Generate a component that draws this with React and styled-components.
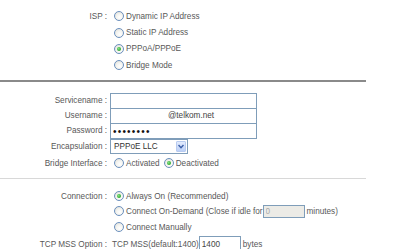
import React from "react";
import styled, { createGlobalStyle } from "styled-components";

const Global = createGlobalStyle`
  html, body {
    margin: 0;
    padding: 0;
    background: #ffffff;
  }
  body {
    font-family: "Liberation Sans", Arial, sans-serif;
    font-size: 8.2px;
    color: #585858;
  }
`;

const Page = styled.div`
  width: 400px;
  height: 249px;
  overflow: hidden;
  padding-top: 8px;
  box-sizing: border-box;
`;

const Section = styled.div`
  display: flex;
  flex-direction: column;
  margin-top: ${(p) => p.$top || 0}px;
`;

const Row = styled.div`
  display: grid;
  grid-template-columns: 110px 1fr;
  height: ${(p) => p.$h || 16}px;
  align-items: ${(p) => (p.$stack ? "start" : "center")};
`;

const Label = styled.div`
  text-align: right;
  padding-right: 3px;
  white-space: nowrap;
  line-height: ${(p) => (p.$stack ? "16px" : "normal")};
`;

const Value = styled.div`
  display: flex;
  align-items: center;
  white-space: nowrap;
  padding-left: ${(p) => p.$pad || 0}px;
`;

const Option = styled.label`
  display: flex;
  align-items: center;
  gap: 2px;
  margin-left: 4px;
`;

const Radio = styled.span`
  width: 8px;
  height: 8px;
  border-radius: 50%;
  border: 1px solid #6a8fbd;
  background: radial-gradient(circle at 60% 65%, #ffffff 0%, #f4f4f0 45%, #d9d9d3 100%);
  display: flex;
  align-items: center;
  justify-content: center;
  &::after {
    content: "";
    display: ${(p) => (p.$checked ? "block" : "none")};
    width: 4px;
    height: 4px;
    border-radius: 50%;
    background: radial-gradient(circle at 40% 40%, #86e486 0%, #2aa52a 70%);
  }
`;

const Rule = styled.div`
  width: 366px;
  height: ${(p) => p.$h}px;
  background: ${(p) => p.$color};
  margin-top: ${(p) => p.$top}px;
`;

const TextInput = styled.input`
  box-sizing: border-box;
  margin: 0;
  width: ${(p) => p.$w}px;
  height: ${(p) => p.$hgt || 16}px;
  border: 1px solid #7f9db9;
  padding: 0 2px;
  font-family: inherit;
  font-size: 8.2px;
  color: ${(p) => (p.disabled ? "#a8a8a8" : "#444")};
  background: ${(p) => (p.disabled ? "#ecebe6" : "#ffffff")};
  text-indent: ${(p) => p.$indent || 0}px;
  outline: none;
`;

const PasswordInput = styled(TextInput)`
  font-size: 10px;
  letter-spacing: 1.2px;
  color: #111;
`;

const Select = styled.div`
  box-sizing: border-box;
  width: 78px;
  height: 15px;
  border: 1px solid #7f9db9;
  display: flex;
  align-items: center;
  justify-content: space-between;
  padding: 0 1px 0 3px;
  color: #333;
  background: #fff;
`;

const Arrow = styled.span`
  box-sizing: border-box;
  width: 10px;
  height: 11px;
  border: 1px solid #b8cbf0;
  border-radius: 1px;
  background: linear-gradient(#e2ebfd, #bcd0f7);
  display: flex;
  align-items: center;
  justify-content: center;
`;

const Unit = styled.span`
  margin-left: 2px;
`;

const ISP_OPTIONS = ["Dynamic IP Address", "Static IP Address", "PPPoA/PPPoE", "Bridge Mode"];

export default function App() {
  return (
    <Page>
      <Global />
      <Section>
        {ISP_OPTIONS.map((opt, i) => (
          <Row key={opt} $h={16.4}>
            <Label>{i === 0 ? "ISP :" : ""}</Label>
            <Value>
              <Option>
                <Radio $checked={opt === "PPPoA/PPPoE"} />
                {opt}
              </Option>
            </Value>
          </Row>
        ))}
      </Section>

      <Rule $h={2} $color="#8a8a8a" $top={6} />

      <Section $top={11}>
        <Row $h={15} $stack>
          <Label $stack>Servicename :</Label>
          <Value>
            <TextInput $w={147} defaultValue="" />
          </Value>
        </Row>
        <Row $h={15.5} $stack>
          <Label $stack>Username :</Label>
          <Value>
            <TextInput $w={147} $indent={55} defaultValue="@telkom.net" />
          </Value>
        </Row>
        <Row $h={15.5} $stack>
          <Label $stack>Password :</Label>
          <Value>
            <PasswordInput type="password" $w={147} defaultValue="12345678" />
          </Value>
        </Row>
        <Row $h={16}>
          <Label>Encapsulation :</Label>
          <Value>
            <Select>
              PPPoE LLC
              <Arrow>
                <svg width="6" height="5" viewBox="0 0 6 5">
                  <path d="M0.5 1 L3 3.8 L5.5 1" fill="none" stroke="#3a5ea8" strokeWidth="1.4" />
                </svg>
              </Arrow>
            </Select>
          </Value>
        </Row>
        <Row $h={17}>
          <Label>Bridge Interface :</Label>
          <Value>
            <Option>
              <Radio />
              Activated
            </Option>
            <Option>
              <Radio $checked />
              Deactivated
            </Option>
          </Value>
        </Row>
      </Section>

      <Rule $h={1} $color="#d8d8d8" $top={6} />

      <Section $top={10}>
        <Row $h={15}>
          <Label>Connection :</Label>
          <Value>
            <Option>
              <Radio $checked />
              Always On (Recommended)
            </Option>
          </Value>
        </Row>
        <Row $h={15}>
          <Label />
          <Value>
            <Option>
              <Radio />
              Connect On-Demand (Close if idle for
            </Option>
            <TextInput $w={42} $hgt={13} disabled defaultValue="0" />
            <Unit>minutes)</Unit>
          </Value>
        </Row>
        <Row $h={17}>
          <Label />
          <Value>
            <Option>
              <Radio />
              Connect Manually
            </Option>
          </Value>
        </Row>
        <Row $h={16}>
          <Label>TCP MSS Option :</Label>
          <Value $pad={2}>
            TCP MSS(default:1400)
            <TextInput $w={42} $hgt={17} defaultValue="1400" />
            <Unit>bytes</Unit>
          </Value>
        </Row>
      </Section>
    </Page>
  );
}
